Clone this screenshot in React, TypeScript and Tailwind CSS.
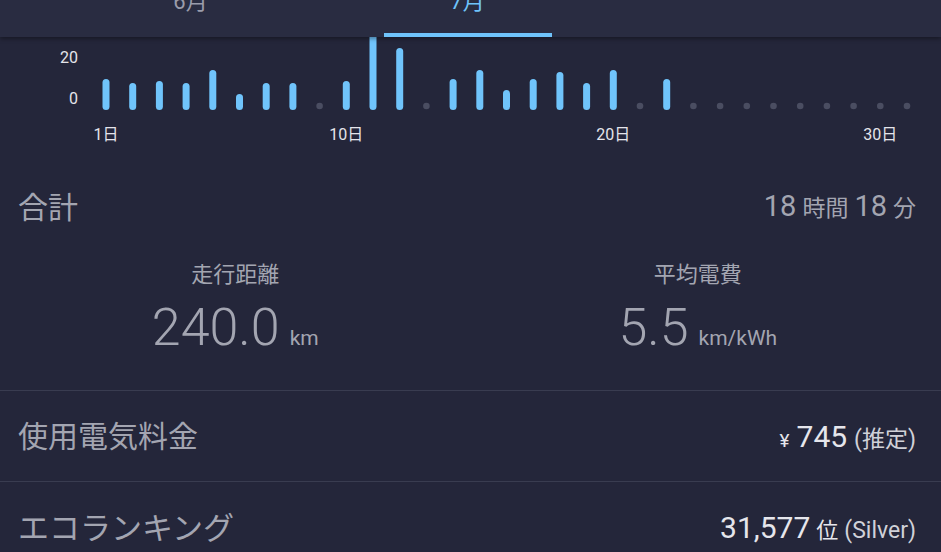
import React from "react";

const FONT = { fontFamily: "Roboto, 'Noto Sans CJK JP', sans-serif" };

const bars: (number | null)[] = [
  79, 83, 81, 83, 70, 94, 83, 83, null, 81, 33, 48, null, 79, 70, 90, 79, 72, 83, 70, null, 79,
  null, null, null, null, null, null, null, null, null,
];

function Chart() {
  const dayX = (d: number) => 106 + (d - 1) * 26.7;
  const off = 37;
  const base = 110 - off;
  return (
    <svg width={941} height={113} className="block">
      {bars.map((t, i) => {
        const x = dayX(i + 1);
        if (t === null) {
          return <circle key={i} cx={x} cy={106 - off} r={3.3} fill="#4a4d61" />;
        }
        const top = t - off;
        return (
          <rect
            key={i}
            x={x - 3.5}
            y={top}
            width={7}
            height={base - top}
            rx={3.5}
            fill="#70c4fb"
          />
        );
      })}
      <text x={78} y={20 + 6} textAnchor="end" fontSize={16} fill="#e4e4ea" style={FONT}>20</text>
      <text x={78} y={61 + 6} textAnchor="end" fontSize={16} fill="#e4e4ea" style={FONT}>0</text>
      {[
        [1, "1日"],
        [10, "10日"],
        [20, "20日"],
        [30, "30日"],
      ].map(([d, l]) => (
        <text
          key={l as string}
          x={dayX(d as number)}
          y={97 + 6}
          textAnchor="middle"
          fontSize={16}
          fill="#e4e4ea"
          style={FONT}
        >
          {l}
        </text>
      ))}
    </svg>
  );
}

export default function App() {
  return (
    <div className="w-[941px] h-[552px] overflow-hidden bg-[#24263a] relative" style={FONT}>
      <div className="relative z-10 h-[37px] bg-[#292c41] flex pl-[52px] shadow-[0_2px_4px_rgba(0,0,0,0.35)]">
        <div className="w-[277px] flex flex-col items-center justify-between">
          <div className="text-[22px] leading-[22px] mt-[-9px] text-[#9a9cab]">6月</div>
        </div>
        <div className="w-[277px] flex flex-col items-center justify-between">
          <div className="text-[22px] leading-[22px] mt-[-9px] text-[#6fc3fa]">7月</div>
          <div className="w-[168px] h-[4px] bg-[#6fc3fa]" />
        </div>
      </div>
      <Chart />
      <div className="mt-[27px] h-[60px] flex items-center justify-between pl-[18px] pr-[25px]">
        <div className="text-[30px] text-[#a3a5b1]">合計</div>
        <div className="flex items-baseline gap-[6px] text-[#a3a5b1]">
          <span className="text-[29px]">18</span>
          <span className="text-[23px]">時間</span>
          <span className="text-[29px]">18</span>
          <span className="text-[23px]">分</span>
        </div>
      </div>
      <div className="grid grid-cols-2 pt-[23px] h-[153px]">
        <div className="flex flex-col items-center">
          <div className="text-[22px] leading-[30px] text-[#a3a5b1]">走行距離</div>
          <div className="flex items-baseline gap-[10px] mt-[8px] text-[#a3a5b1]">
            <span className="text-[52px] leading-[60px] font-light">240.0</span>
            <span className="text-[21px]">km</span>
          </div>
        </div>
        <div className="flex flex-col items-center pr-[16px]">
          <div className="text-[22px] leading-[30px] text-[#a3a5b1]">平均電費</div>
          <div className="flex items-baseline gap-[10px] mt-[8px] text-[#a3a5b1]">
            <span className="text-[52px] leading-[60px] font-light">5.5</span>
            <span className="text-[21px]">km/kWh</span>
          </div>
        </div>
      </div>
      <div className="h-[1px] bg-[#393c50]" />
      <div className="h-[90px] flex items-center justify-between pl-[18px] pr-[25px]">
        <div className="text-[30px] text-[#a3a5b1]">使用電気料金</div>
        <div className="flex items-baseline gap-[7px] text-[#e6e6ec]">
          <span className="text-[19px]">¥</span>
          <span className="text-[30px]">745</span>
          <span className="text-[23px] text-[#d0d1d8]">(推定)</span>
        </div>
      </div>
      <div className="h-[1px] bg-[#393c50]" />
      <div className="h-[90px] flex items-center justify-between pl-[18px] pr-[25px]">
        <div className="text-[31px] text-[#a3a5b1] mt-[4px]">エコランキング</div>
        <div className="flex items-baseline gap-[6px] text-[#e6e6ec]">
          <span className="text-[30px]">31,577</span>
          <span className="text-[22px]">位</span>
          <span className="text-[23px] text-[#d0d1d8]">(Silver)</span>
        </div>
      </div>
    </div>
  );
}
